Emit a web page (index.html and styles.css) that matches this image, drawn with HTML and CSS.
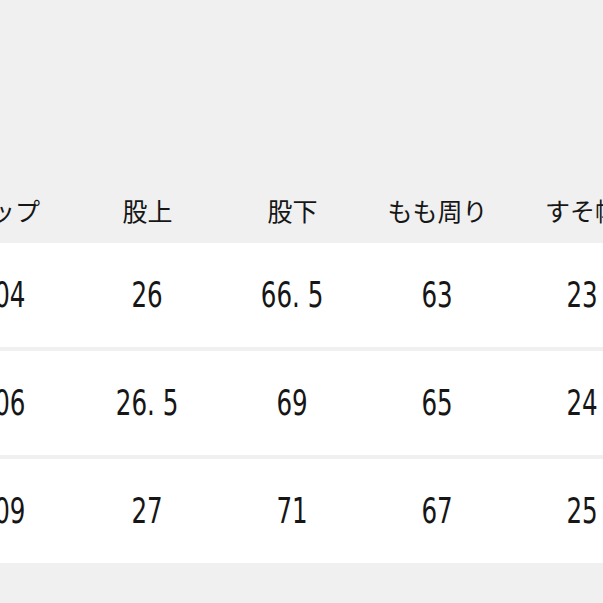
FILE: index.html
```html
<!DOCTYPE html>
<html lang="ja">
<head>
<meta charset="utf-8">
<title>サイズ表</title>
<link rel="stylesheet" href="styles.css">
</head>
<body>
<div class="page">
  <div class="table">
    <div class="row head">
      <div class="cell">ヒップ</div>
      <div class="cell">股上</div>
      <div class="cell">股下</div>
      <div class="cell">もも周り</div>
      <div class="cell">すそ幅</div>
    </div>
    <div class="row body">
      <div class="cell"><span class="num">104</span></div>
      <div class="cell"><span class="num">26</span></div>
      <div class="cell"><span class="num">66. 5</span></div>
      <div class="cell"><span class="num">63</span></div>
      <div class="cell"><span class="num">23</span></div>
    </div>
    <div class="row body">
      <div class="cell"><span class="num">106</span></div>
      <div class="cell"><span class="num">26. 5</span></div>
      <div class="cell"><span class="num">69</span></div>
      <div class="cell"><span class="num">65</span></div>
      <div class="cell"><span class="num">24</span></div>
    </div>
    <div class="row body">
      <div class="cell"><span class="num">109</span></div>
      <div class="cell"><span class="num">27</span></div>
      <div class="cell"><span class="num">71</span></div>
      <div class="cell"><span class="num">67</span></div>
      <div class="cell"><span class="num">25</span></div>
    </div>
  </div>
</div>
</body>
</html>
```

FILE: styles.css
```css
html, body {
  margin: 0;
  padding: 0;
  background: #f0f0f0;
}
body {
  width: 603px;
  height: 603px;
  overflow: hidden;
}
.page {
  padding-top: 183px;
}
.table {
  margin-left: -70px;
  display: flex;
  flex-direction: column;
  gap: 4px;
  width: 725px;
}
.row {
  display: grid;
  grid-template-columns: repeat(5, 145px);
}
.cell {
  display: flex;
  align-items: center;
  justify-content: center;
  white-space: nowrap;
  color: #161616;
}
.head {
  height: 56px;
}
.head .cell {
  font-family: "Noto Sans CJK JP", sans-serif;
  font-size: 25px;
  padding-bottom: 2px;
}
.body {
  height: 104px;
  background: #ffffff;
}
.body .cell {
  font-family: "DejaVu Sans Condensed", "DejaVu Sans", sans-serif;
  font-size: 35px;
}
.num {
  display: inline-block;
  transform: scaleX(0.78);
}
```
